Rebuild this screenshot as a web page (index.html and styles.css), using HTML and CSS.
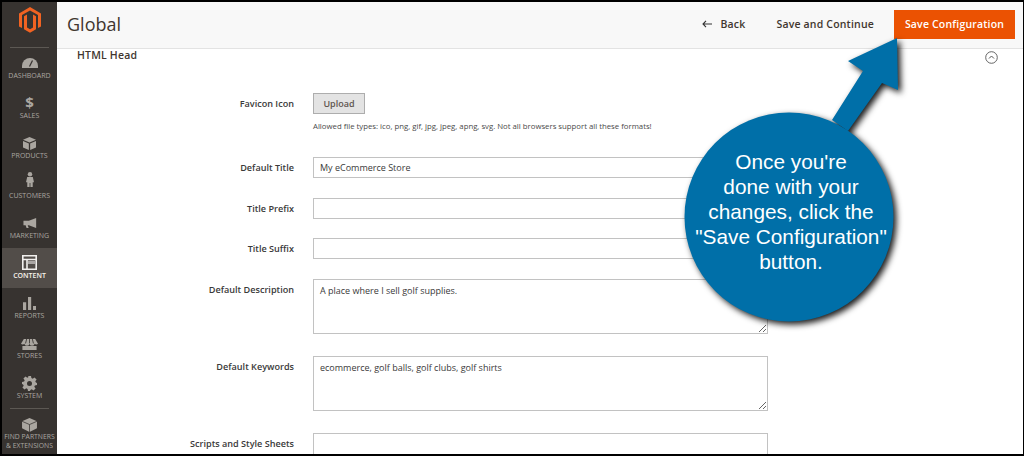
FILE: index.html
```html
<!DOCTYPE html>
<html lang="en">
<head>
<meta charset="utf-8">
<title>Global</title>
<link rel="stylesheet" href="styles.css">
</head>
<body>
<div class="frame">
  <nav class="sidebar">
    <div class="logo">
      <svg width="22" height="26" viewBox="0 0 22 26"><path fill="#f26322" d="M11 0 22 6.400V19.400L19 21.100V8.100L11 3.500 3 8.100V21.100L0 19.400V6.400Z"/><path fill="#f26322" d="M5 9.300 8 7.600V20.600L11 22.300 14 20.600V7.600L17 9.300V22.300L11 25.800 5 22.300Z"/></svg>
    </div>
    <div class="nav-rule"></div>
    <a class="item"><svg class="ic ic-gap" width="16" height="10" viewBox="0 0 16 10"><path fill="#aaa6a0" d="M8 0a8 8 0 0 1 8 8v2H0V8a8 8 0 0 1 8-8Z"/><path stroke="#373330" stroke-width="1.300" d="M7.500 8.500 10.500 2.500"/></svg><span>DASHBOARD</span></a>
    <a class="item"><span class="dollar">$</span><span>SALES</span></a>
    <a class="item"><svg class="ic" width="13" height="13" viewBox="0 0 14 14"><path fill="#aaa6a0" d="M7 0 14 3 7 6 0 3ZM0 4.300 6.300 7V14L0 11.200ZM14 4.300 7.700 7V14L14 11.200Z"/></svg><span>PRODUCTS</span></a>
    <a class="item"><svg class="ic ic-gap" width="8" height="17" viewBox="0 0 10 19"><circle cx="5" cy="3" r="2.800" fill="#aaa6a0"/><path fill="#aaa6a0" d="M1.500 6.500h7L10 13H8.400V19H5.500V14H4.500V19H1.600V13H0Z"/></svg><span>CUSTOMERS</span></a>
    <a class="item"><svg class="ic ic-gap" width="14" height="10" viewBox="0 0 17 13"><path fill="#aaa6a0" d="M16.500 0V13L7 9.500H5.500L6.800 13H4L2.800 9.500H0V3.500H7Z"/></svg><span>MARKETING</span></a>
    <a class="item active"><svg class="ic" width="15" height="15" viewBox="0 0 15 15"><path fill="none" stroke="#f2f0ee" stroke-width="1.600" d="M.8.8h13.400v13.400H.8ZM.8 4.500h13.400M5 4.500v9.700"/><path fill="#f2f0ee" opacity=".55" d="M6 6h7v3H6z"/></svg><span>CONTENT</span></a>
    <a class="item"><svg class="ic" width="13" height="13" viewBox="0 0 14 15" preserveAspectRatio="none"><path fill="#aaa6a0" d="M0 6h3.400v9H0ZM5.400 0h3.400v15H5.400ZM10.800 10.500h3.200V15h-3.200Z"/></svg><span>REPORTS</span></a>
    <a class="item"><svg class="ic" width="17" height="11" viewBox="0 0 18 15" preserveAspectRatio="none"><path fill="#aaa6a0" d="M3 0h12l3 6.500a2.200 2.200 0 0 1-3.600 0 2.700 2.700 0 0 1-5.400 0 2.700 2.700 0 0 1-5.400 0A2.200 2.200 0 0 1 0 6.500ZM1.500 9.500h15V15h-15Z"/><path stroke="#373330" d="M6 0 4.800 6M9 0v6M12 0l1.200 6"/></svg><span>STORES</span></a>
    <a class="item item-system"><svg class="ic" width="15" height="15" viewBox="0 0 15 15"><path fill="#aaa6a0" fill-rule="evenodd" d="M6 0h3l.4 2.100 1.300.6L12.500 1.400l2.100 2.100-1.300 1.800.6 1.300L15 7v2l-2.100.4-.6 1.300 1.300 1.800-2.100 2.100-1.800-1.300-1.300.6L8 15H6l-.4-2.100-1.300-.6-1.800 1.300L.4 11.500l1.300-1.800-.6-1.300L0 8V6l2.100-.4.6-1.300L1.400 2.500 3.500.4l1.800 1.300 1.300-.6ZM7.500 5a2.500 2.500 0 1 0 0 5 2.500 2.500 0 0 0 0-5Z"/></svg><span>SYSTEM</span></a>
    <div class="nav-rule"></div>
    <a class="item item-ext"><svg class="ic" width="15" height="14" viewBox="0 0 16 15"><path fill="#aaa6a0" d="M8 0 16 3.500V11L8 15 0 11V3.500Z"/><path fill="none" stroke="#373330" stroke-width=".8" d="M0 3.500 8 7l8-3.500M8 7v8"/></svg><span>FIND PARTNERS<br>&amp; EXTENSIONS</span></a>
  </nav>

  <main class="main">
    <header class="topbar">
      <h1>Global</h1>
      <div class="actions">
        <a class="back"><svg width="10" height="8" viewBox="0 0 10 8"><path fill="none" stroke="#333" stroke-width="1.100" d="M10 4H1M4 .8 1 4l3 3.200"/></svg>Back</a>
        <a class="continue">Save and Continue</a>
        <a class="save">Save Configuration</a>
      </div>
    </header>

    <section class="section">
      <div class="section-head">
        <h2>HTML Head</h2>
        <svg width="13" height="13" viewBox="0 0 13 13"><circle cx="6.500" cy="6.500" r="5.800" fill="none" stroke="#555" stroke-width=".9"/><path fill="none" stroke="#555" d="M4 7.500 6.500 5 9 7.500"/></svg>
      </div>
      <div class="row row-upload">
        <label>Favicon Icon</label>
        <div class="field">
          <button class="upload">Upload</button>
          <p class="hint">Allowed file types: ico, png, gif, jpg, jpeg, apng, svg. Not all browsers support all these formats!</p>
        </div>
      </div>
      <div class="row row-title"><label>Default Title</label><div class="field"><input class="input" value="My eCommerce Store"></div></div>
      <div class="row row-prefix"><label>Title Prefix</label><div class="field"><input class="input"></div></div>
      <div class="row row-suffix"><label>Title Suffix</label><div class="field"><input class="input"></div></div>
      <div class="row row-desc"><label>Default Description</label><div class="field"><textarea class="input area">A place where I sell golf supplies.</textarea></div></div>
      <div class="row row-keys"><label>Default Keywords</label><div class="field"><textarea class="input area">ecommerce, golf balls, golf clubs, golf shirts</textarea></div></div>
      <div class="row row-scripts"><label>Scripts and Style Sheets</label><div class="field"><textarea class="input area"></textarea></div></div>
    </section>
  </main>

  <div class="callout">
    <svg class="callout-shape" width="240" height="300" viewBox="0 0 240 300"><circle cx="109" cy="180" r="104.500" fill="#006fa8"/><path fill="#006fa8" d="M217 1 218 53 202 46 168 94 152 83 183 34 168 24Z"/></svg>
    <p class="callout-text">Once you're<br>done with your<br>changes, click the<br>"Save Configuration"<br>button.</p>
  </div>
</div>
</body>
</html>
```
FILE: styles.css
```css
* { box-sizing: border-box; }
html, body { margin: 0; height: 100%; }
body { background: #000; font-family: "Open Sans", "Liberation Sans", sans-serif; color: #333; }
.frame { position: relative; display: flex; width: 1024px; height: 456px; padding: 2px 1px 2px 2px; overflow: hidden; }

.sidebar { flex: 0 0 55px; background: #373330; display: flex; flex-direction: column; overflow: hidden; }
.logo { height: 45px; display: flex; justify-content: center; padding-top: 5px; }
.nav-rule { height: 1px; margin: 0 8px; background: #5c5853; flex: none; }
.item { height: 40px; flex: none; display: flex; flex-direction: column; align-items: center; justify-content: flex-end; padding-bottom: 8px; color: #aaa6a0; font-size: 7px; line-height: 9px; text-align: center; white-space: nowrap; }
.item .ic { margin-bottom: 1px; display: block; }
.item .ic-gap { margin-bottom: 3px; }
.item.active { background: #524d49; color: #f7f3eb; font-weight: 600; }
.dollar { font-size: 15px; line-height: 15px; font-weight: 700; margin-bottom: 1px; }
.item-system .ic { margin-bottom: 0; }
.item-ext { height: 45px; padding-bottom: 4px; font-size: 6.800px; line-height: 8.500px; }

.main { flex: 1; background: #fff; min-width: 0; overflow: hidden; }
.topbar { height: 47px; background: #f8f8f8; border-bottom: 1px solid #e3e3e3; display: flex; align-items: center; justify-content: space-between; padding: 0 8px 2px 10px; }
.topbar h1 { margin: 0; font-size: 18px; font-weight: 400; color: #41362f; }
.actions { display: flex; align-items: center; font-size: 10.500px; font-weight: 600; color: #41362f; letter-spacing: .18px; }
.back { display: flex; align-items: center; gap: 8px; margin-right: 31px; }
.continue { margin-right: 20px; }
.save { width: 121px; height: 29px; display: flex; align-items: center; justify-content: center; background: #eb5202; color: #fff; }

.section { padding: 0 24px 0 20px; }
.section-head { height: 12px; display: flex; justify-content: space-between; align-items: center; padding-right: 1px; }
.section-head h2 { margin: 0; font-size: 10.500px; font-weight: 600; color: #41362f; letter-spacing: .18px; }
.section-head svg { margin-top: 4px; }

.row { display: flex; align-items: flex-start; }
.row label { width: 217px; text-align: right; font-size: 9.100px; font-weight: 600; color: #3a3a3a; line-height: 21px; white-space: nowrap; }
.field { width: 455px; margin-left: 19px; }
.row-upload { margin-top: 32px; }
.row-title { margin-top: 26px; }
.row-prefix { margin-top: 20px; }
.row-suffix { margin-top: 19px; }
.row-desc { margin-top: 20px; }
.row-keys, .row-scripts { margin-top: 22px; }

.upload { display: block; width: 52px; height: 21px; padding: 0; background: #e3e3e3; border: 1px solid #adadad; font: 600 9px "Open Sans", sans-serif; color: #5f5650; }
.hint { margin: 7px 0 0; font-size: 7.770px; line-height: 10px; color: #4a4a4a; white-space: nowrap; }
.input { display: block; width: 100%; height: 21px; margin: 0; border: 1px solid #c2c2c2; border-radius: 0; outline: none; padding: 0 6px; font: 400 9px/19px "Open Sans", sans-serif; color: #3a3a3a; background: #fff; }
.input.area { height: 55px; padding-top: 1px; resize: vertical; }

.callout { position: absolute; left: 680px; top: 37px; width: 240px; height: 300px; }
.callout-shape { display: block; overflow: visible; filter: drop-shadow(3px 3px 3px rgba(0,0,0,.9)); }
.callout-text { position: absolute; left: 11px; top: 112px; width: 200px; margin: 0; font-family: "Liberation Sans", Arial, sans-serif; font-size: 20.800px; line-height: 25px; color: #fff; text-align: center; white-space: nowrap; }
```
